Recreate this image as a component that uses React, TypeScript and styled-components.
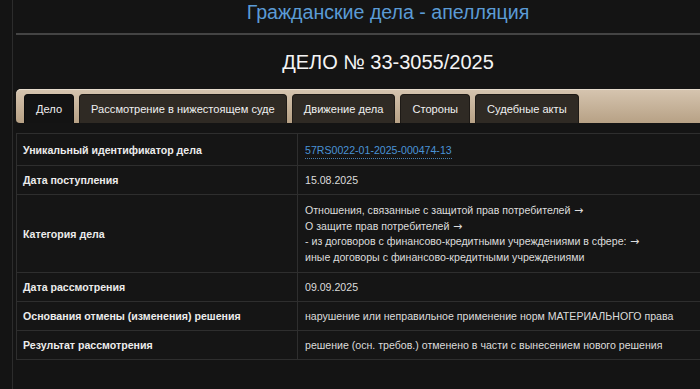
import { FC } from 'react';
import styled, { createGlobalStyle } from 'styled-components';

const GlobalStyle = createGlobalStyle`
  html, body {
    margin: 0;
    padding: 0;
    background: #141414;
    overflow: hidden;
  }
  body {
    font-family: 'Liberation Sans', Arial, sans-serif;
  }
`;

const Page = styled.div`
  display: flex;
  min-height: 389px;
`;

const Rail = styled.div`
  width: 12px;
  flex: none;
  border-right: 1px solid #2c2c2c;
`;

const Main = styled.main`
  flex: none;
  width: 744px;
  margin-left: 3px;
`;

const Header = styled.header`
  height: 33px;
  border-bottom: 2px solid #444;
  display: flex;
  justify-content: center;
  align-items: flex-start;
`;

const Title = styled.h1`
  margin: 0;
  font-size: 19.6px;
  font-weight: normal;
  line-height: 24px;
  color: #5b9bd5;
`;

const CaseNumber = styled.h2`
  margin: 0;
  height: 54px;
  display: flex;
  align-items: center;
  justify-content: center;
  font-size: 20px;
  font-weight: normal;
  color: #f4f4f4;
`;

const TabBar = styled.nav`
  display: flex;
  align-items: flex-end;
  gap: 5px;
  height: 34px;
  padding: 0 8px;
  border-radius: 5px 5px 4px 4px;
  background: linear-gradient(#d6c5b0, #b7a185);
  box-shadow: inset 0 1px 0 #e6dccd;
`;

const Tab = styled.button<{ $active?: boolean }>`
  height: 29px;
  padding: 0 11px;
  border: 1px solid ${(p) => (p.$active ? '#0c0c0c' : '#1e1a16')};
  border-bottom: none;
  border-radius: 4px 4px 0 0;
  background: ${(p) => (p.$active ? '#131313' : '#2f2a24')};
  color: #f0f0f0;
  font-family: inherit;
  font-size: 11.1px;
  cursor: pointer;
`;

const Table = styled.table`
  width: 100%;
  margin-top: 10px;
  border-collapse: collapse;
  background: #151515;
  font-size: 10.6px;
`;

const Row = styled.tr`
  border: 1px solid #2e2e2e;
`;

const Label = styled.th`
  width: 268px;
  padding: 8px 6px;
  border-right: 1px solid #2e2e2e;
  text-align: left;
  font-weight: bold;
  color: #ececec;
  line-height: 12px;
`;

const Value = styled.td`
  padding: 8px 7px;
  color: #dcdcdc;
  line-height: 12px;
`;

const Lines = styled.div`
  line-height: 15.5px;
  margin: 0 0 -1px;
`;

const Arrow = styled.span`
  font-family: 'DejaVu Sans', sans-serif;
  font-size: 11px;
`;

const Link = styled.a`
  color: #4a93d6;
  text-decoration: none;
  border-bottom: 1px dotted #4a7fb0;
  padding-bottom: 2px;
`;

const tabs = ['Дело', 'Рассмотрение в нижестоящем суде', 'Движение дела', 'Стороны', 'Судебные акты'];

const category: [string, boolean][] = [
  ['Отношения, связанные с защитой прав потребителей', true],
  ['О защите прав потребителей', true],
  ['- из договоров с финансово-кредитными учреждениями в сфере:', true],
  ['иные договоры с финансово-кредитными учреждениями', false],
];

const App: FC = () => (
  <>
    <GlobalStyle />
    <Page>
      <Rail />
      <Main>
        <Header>
          <Title>Гражданские дела - апелляция</Title>
        </Header>
        <CaseNumber>ДЕЛО № 33-3055/2025</CaseNumber>
        <TabBar>
          {tabs.map((t, i) => (
            <Tab key={t} $active={i === 0}>
              {t}
            </Tab>
          ))}
        </TabBar>
        <Table>
          <tbody>
            <Row>
              <Label style={{ paddingTop: 10, paddingBottom: 9 }}>Уникальный идентификатор дела</Label>
              <Value style={{ paddingTop: 10, paddingBottom: 9 }}>
                <Link href="#">57RS0022-01-2025-000474-13</Link>
              </Value>
            </Row>
            <Row>
              <Label>Дата поступления</Label>
              <Value>15.08.2025</Value>
            </Row>
            <Row>
              <Label>Категория дела</Label>
              <Value>
                <Lines>
                  {category.map(([c, arrow]) => (
                    <div key={c}>
                      {c}
                      {arrow && <Arrow> →</Arrow>}
                    </div>
                  ))}
                </Lines>
              </Value>
            </Row>
            <Row>
              <Label>Дата рассмотрения</Label>
              <Value>09.09.2025</Value>
            </Row>
            <Row>
              <Label>Основания отмены (изменения) решения</Label>
              <Value>нарушение или неправильное применение норм МАТЕРИАЛЬНОГО права</Value>
            </Row>
            <Row>
              <Label>Результат рассмотрения</Label>
              <Value>решение (осн. требов.) отменено в части с вынесением нового решения</Value>
            </Row>
          </tbody>
        </Table>
      </Main>
    </Page>
  </>
);

export default App;
